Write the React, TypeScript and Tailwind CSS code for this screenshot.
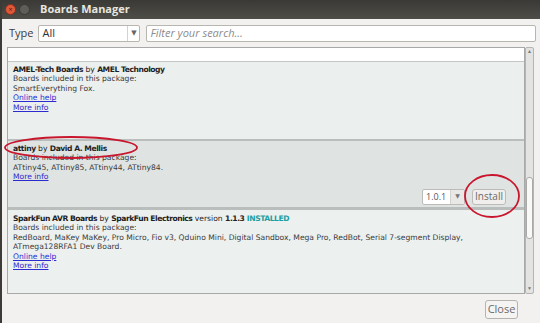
import React from 'react';

const body = { fontFamily: '"DejaVu Sans", Verdana, sans-serif' };
const ui = { fontFamily: '"Open Sans", "DejaVu Sans", sans-serif' };

function Link({ children }: { children: React.ReactNode }) {
  return <div className="text-[#2b2bd0] underline">{children}</div>;
}

function B({ children, className = '' }: { children: React.ReactNode; className?: string }) {
  return <b className={`tracking-[-0.45px] ${className}`}>{children}</b>;
}

function Scrollbar() {
  return (
    <div className="w-[9px] flex flex-col border border-[#b4b4b2] bg-[#e3e3e1] rounded-[2px]">
      <div className="h-[8px] flex items-center justify-center text-[5px] text-[#777]">▲</div>
      <div className="h-[121px]" />
      <div className="h-[62px] rounded-[3px] border border-[#a9a9a7] bg-[#f9f9f8]" />
      <div className="flex-1" />
      <div className="h-[8px] flex items-center justify-center text-[5px] text-[#777]">▼</div>
    </div>
  );
}

export default function App() {
  return (
    <div className="relative w-[540px] h-[323px] overflow-hidden bg-[#f2f1f0] border-l-2 border-[#3c3b37] flex flex-col">
      {/* title bar */}
      <div className="h-[19px] -ml-[2px] flex items-center bg-gradient-to-b from-[#3a3935] to-[#4e4d48]">
        <div className="ml-[5px] w-[11px] h-[11px] rounded-full bg-[#e0583a] border border-[#8a2e1c] flex items-center justify-center text-[7px] leading-none text-[#5a1a0e]">×</div>
        <div className="ml-[3px] w-[11px] h-[11px] rounded-full bg-[#5e5d58] border border-[#3a3935]" />
        <span className="ml-[10px] text-[11px] font-bold text-[#e8e6df]" style={ui}>Boards Manager</span>
      </div>

      {/* filter row */}
      <div className="mt-[6px] h-[17px] flex items-center text-[11px]" style={ui}>
        <span className="ml-[7px] text-[#3c3c3c]">Type</span>
        <div className="ml-[5px] w-[102px] h-[17px] flex items-center bg-white border border-[#b8b6b1] rounded-[2px]">
          <span className="ml-[3px] flex-1 text-[#333]">All</span>
          <div className="h-full w-px bg-[#d4d2ce]" />
          <span className="w-[11px] text-center text-[7px] text-[#666]">▼</span>
        </div>
        <div className="ml-[6px] w-[390px] h-[17px] flex items-center bg-white border border-[#b8b6b1] rounded-[2px]">
          <span className="ml-[3px] italic text-[#8c8c8c]">Filter your search...</span>
        </div>
      </div>

      {/* list */}
      <div className="mt-[5px] ml-[5px] h-[247px] flex">
        <div className="w-[518px] flex flex-col border border-[#a8a8a8] text-[7.6px] leading-[9.4px] text-[#3a3a3a]" style={body}>
          <div className="h-[14px] bg-white border-b border-[#c4c6c5]" />

          <div className="h-[77px] bg-[#ebefee] pl-[5px] pt-[3px]">
            <div className="text-[#1e1e1e]">
              <B>AMEL-Tech Boards</B> by <B>AMEL Technology</B>
            </div>
            <div>Boards included in this package:</div>
            <div>SmartEverything Fox.</div>
            <Link>Online help</Link>
            <Link>More info</Link>
          </div>

          <div className="h-[2px] bg-[#b9bdbc]" />

          <div className="h-[66px] bg-[#dfe4e3] pl-[5px] pt-[3px] flex flex-col">
            <div className="text-[#1e1e1e]">
              <B>attiny</B> by <B>David A. Mellis</B>
            </div>
            <div>Boards included in this package:</div>
            <div>ATtiny45, ATtiny85, ATtiny44, ATtiny84.</div>
            <Link>More info</Link>
            <div className="mt-auto mb-[2px] mr-[18px] flex justify-end items-center gap-[7px]" style={ui}>
              <div className="w-[43px] h-[16px] flex items-center bg-white border border-[#bdbbb7] rounded-[2px] text-[9px]">
                <span className="ml-[3px] flex-1 text-[#555]">1.0.1</span>
                <div className="h-full w-px bg-[#d4d2ce]" />
                <span className="w-[13px] h-full flex items-center justify-center text-[6px] text-[#777] bg-[#e9e8e6]">▼</span>
              </div>
              <div className="w-[34px] h-[16px] flex items-center justify-center bg-[#f0efed] border border-[#bdbbb7] rounded-[3px] text-[10px] text-[#6a6a6a]">
                Install
              </div>
            </div>
          </div>

          <div className="h-[3px] bg-[#b9bdbc]" />

          <div className="flex-1 bg-[#ecf0ef] pl-[5px] pt-[4px]">
            <div className="text-[#1e1e1e]">
              <B>SparkFun AVR Boards</B> by <B>SparkFun Electronics</B> version <B>1.1.3</B>{' '}
              <B className="text-[#1b9fa3]">INSTALLED</B>
            </div>
            <div>Boards included in this package:</div>
            <div>RedBoard, MaKey MaKey, Pro Micro, Fio v3, Qduino Mini, Digital Sandbox, Mega Pro, RedBot, Serial 7-segment Display,</div>
            <div>ATmega128RFA1 Dev Board.</div>
            <Link>Online help</Link>
            <Link>More info</Link>
          </div>
        </div>
        <Scrollbar />
      </div>

      {/* footer */}
      <div className="mt-[6px] flex justify-end pr-[22px]">
        <div className="w-[33px] h-[19px] flex items-center justify-center bg-[#f5f4f2] border border-[#b5b3ae] rounded-[3px] text-[11px] text-[#6a6a6a]" style={ui}>
          Close
        </div>
      </div>

      {/* red annotation ellipses */}
      <svg className="absolute inset-0 pointer-events-none" width="540" height="323">
        <ellipse cx="69" cy="147.5" rx="66" ry="10.5" fill="none" stroke="#c8162d" strokeWidth="1.8" />
        <ellipse cx="490" cy="196" rx="27" ry="21" fill="none" stroke="#c8162d" strokeWidth="1.8" />
      </svg>
    </div>
  );
}
